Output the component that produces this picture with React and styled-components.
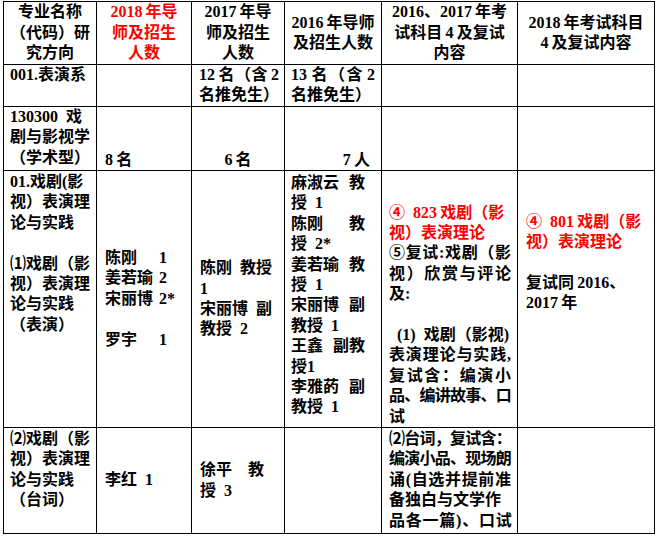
import styled, { createGlobalStyle } from "styled-components";

const GlobalStyle = createGlobalStyle`
  html, body {
    margin: 0;
    padding: 0;
    background: #fff;
  }
  body {
    font-family: "Liberation Serif", "Noto Sans CJK SC", serif;
    font-size: 16px;
    font-weight: 700;
    color: #000;
  }
`;

const Page = styled.div`
  padding: 1px 0 0 3px;
`;

const Sheet = styled.table`
  border-collapse: collapse;
  table-layout: fixed;
  width: 652px;
`;

const Row = styled.tr`
  height: ${({ $h }) => $h}px;
`;

const Cell = styled.td`
  border: 1px solid #000;
  padding: ${({ $pt = 0 }) => $pt}px ${({ $pr = 6 }) => $pr}px 0
    ${({ $pl = 6 }) => $pl}px;
  vertical-align: ${({ $v = "top" }) => $v};
  text-align: ${({ $align = "left" }) => $align};
  line-height: 20.4px;
  white-space: nowrap;
  word-spacing: 4px;
  color: ${({ $red }) => ($red ? "#ff0000" : "#000")};
`;

const Line = styled.div`
  display: ${({ $split }) => ($split ? "flex" : "block")};
  justify-content: space-between;
  height: 20.4px;
  white-space: ${({ $justify }) => ($justify ? "normal" : "nowrap")};
  text-align-last: ${({ $justify }) => ($justify ? "justify" : "auto")};
  letter-spacing: ${({ $tight }) => ($tight ? "-0.8px" : "normal")};
`;

const Red = styled.span`
  color: #ff0000;
`;

const Pair = styled.div`
  display: flex;
  height: 20.4px;
`;

const Name = styled.span`
  width: 54px;
`;

const Blank = () => <Line>&nbsp;</Line>;

const Lines = ({ items }) =>
  items.map((t, i) =>
    t === "" ? <Blank key={i} /> : <Line key={i}>{t}</Line>
  );

const T = "\u2009";

export default function App() {
  return (
    <>
      <GlobalStyle />
      <Page>
        <Sheet>
          <colgroup>
            <col style={{ width: 93 }} />
            <col style={{ width: 95 }} />
            <col style={{ width: 93 }} />
            <col style={{ width: 97 }} />
            <col style={{ width: 136 }} />
            <col style={{ width: 137 }} />
          </colgroup>
          <tbody>
            <Row $h={63}>
              <Cell $v="middle" $align="center">
                <Lines items={["专业名称", "（代码）研", "究方向"]} />
              </Cell>
              <Cell $v="middle" $align="center" $red>
                <Lines items={[`2018${T}年导`, "师及招生", "人数"]} />
              </Cell>
              <Cell $v="middle" $align="center">
                <Lines items={[`2017${T}年导`, "师及招生", "人数"]} />
              </Cell>
              <Cell $v="middle" $align="center">
                <Lines items={[`2016${T}年导师`, "及招生人数"]} />
              </Cell>
              <Cell $v="middle" $align="center">
                <Lines
                  items={[`2016、2017${T}年考`, `试科目${T}4${T}及复试`, "内容"]}
                />
              </Cell>
              <Cell $v="middle" $align="center">
                <Lines items={[`2018${T}年考试科目`, `4${T}及复试内容`]} />
              </Cell>
            </Row>

            <Row $h={42}>
              <Cell>
                <Line>001.表演系</Line>
              </Cell>
              <Cell />
              <Cell $pl={7} $pr={5}>
                <Line $justify>
                  12{T}名（含{T}2
                </Line>
                <Line>名推免生）</Line>
              </Cell>
              <Cell>
                <Line $justify>
                  13{T}名（含{T}2
                </Line>
                <Line>名推免生）</Line>
              </Cell>
              <Cell />
              <Cell />
            </Row>

            <Row $h={64}>
              <Cell>
                <Lines items={["130300 戏", "剧与影视学", "（学术型）"]} />
              </Cell>
              <Cell $v="bottom" $pl={8}>
                <Line>8{T}名</Line>
              </Cell>
              <Cell $v="bottom" $align="center">
                <Line>6{T}名</Line>
              </Cell>
              <Cell $v="bottom" $align="right" $pr={11}>
                <Line>7{T}人</Line>
              </Cell>
              <Cell />
              <Cell />
            </Row>

            <Row $h={257}>
              <Cell $pt={1}>
                <Lines
                  items={[
                    "01.戏剧(影",
                    "视）表演理",
                    "论与实践",
                    "",
                    "⑴戏剧（影",
                    "视）表演理",
                    "论与实践",
                    "（表演）",
                  ]}
                />
              </Cell>
              <Cell $v="middle" $pl={8}>
                <Pair>
                  <Name>陈刚</Name>1
                </Pair>
                <Pair>
                  <Name>姜若瑜</Name>2
                </Pair>
                <Pair>
                  <Name>宋丽博</Name>2*
                </Pair>
                <Blank />
                <Pair>
                  <Name>罗宇</Name>1
                </Pair>
              </Cell>
              <Cell $v="middle" $pl={8}>
                <Lines items={["陈刚 教授", "1", "宋丽博 副", "教授 2"]} />
              </Cell>
              <Cell $pt={2} $pr={16}>
                <Line $split>
                  <span>麻淑云</span>
                  <span>教</span>
                </Line>
                <Line>授 1</Line>
                <Line $split>
                  <span>陈刚</span>
                  <span>教</span>
                </Line>
                <Line>授 2*</Line>
                <Line $split>
                  <span>姜若瑜</span>
                  <span>教</span>
                </Line>
                <Line>授 1</Line>
                <Line $split>
                  <span>宋丽博</span>
                  <span>副</span>
                </Line>
                <Line>教授 1</Line>
                <Line $split>
                  <span>王鑫</span>
                  <span>副教</span>
                </Line>
                <Line>授1</Line>
                <Line $split>
                  <span>李雅菂</span>
                  <span>副</span>
                </Line>
                <Line>教授 1</Line>
              </Cell>
              <Cell $v="bottom" $pl={7}>
                <Line>
                  <Red>④ 823{T}戏剧（影</Red>
                </Line>
                <Line>
                  <Red>视）表演理论</Red>
                </Line>
                <Line $justify>⑤复试:戏剧（影</Line>
                <Line $justify>视）欣赏与评论</Line>
                <Line>及:</Line>
                <Blank />
                <Line>{"\u00a0(1) 戏剧（影视)"}</Line>
                <Line $justify>表演理论与实践,</Line>
                <Line $justify>复试含：编演小</Line>
                <Line $justify $tight>
                  品、编讲故事、口
                </Line>
                <Line>试</Line>
              </Cell>
              <Cell $pl={8}>
                <Blank />
                <Blank />
                <Line>
                  <Red>④ 801{T}戏剧（影</Red>
                </Line>
                <Line>
                  <Red>视）表演理论</Red>
                </Line>
                <Blank />
                <Line>复试同{T}2016、</Line>
                <Line>2017{T}年</Line>
              </Cell>
            </Row>

            <Row $h={106}>
              <Cell $pt={1}>
                <Lines
                  items={["⑵戏剧（影", "视）表演理", "论与实践", "（台词）"]}
                />
              </Cell>
              <Cell $v="middle" $pl={8}>
                <Line>李红 1</Line>
              </Cell>
              <Cell $v="middle" $pl={8}>
                <Lines items={["徐平　教", "授 3"]} />
              </Cell>
              <Cell />
              <Cell $pt={1} $pl={7}>
                <Line $justify $tight>
                  ⑵台词，复试含：
                </Line>
                <Line $justify $tight>
                  编演小品、现场朗
                </Line>
                <Line $justify>诵(自选并提前准</Line>
                <Line>备独白与文学作</Line>
                <Line $justify $tight>
                  品各一篇)、口试
                </Line>
              </Cell>
              <Cell />
            </Row>
          </tbody>
        </Sheet>
      </Page>
    </>
  );
}
